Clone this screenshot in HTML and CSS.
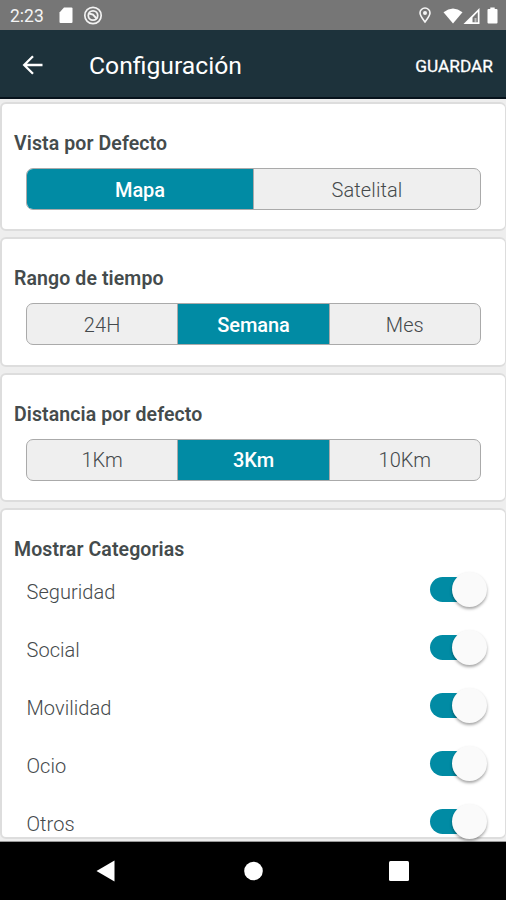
FILE: index.html
```html
<!DOCTYPE html>
<html lang="es">
<head>
<meta charset="utf-8">
<title>Configuración</title>
<link rel="stylesheet" href="styles.css">
</head>
<body>
<div class="status">
  <span class="clock">2:23</span>
  <svg class="sd" width="14" height="17" viewBox="0 0 14 17"><path fill="#fff" d="M5 0.5H12.5Q13.5 0.5 13.5 1.5V15Q13.5 16 12.5 16H1.5Q0.500 16 0.500 15V5.500Z"/></svg>
  <svg class="sync" width="20" height="20" viewBox="0 0 20 20" fill="none" stroke="#f2f2f2"><circle cx="10" cy="9.500" r="8.200" stroke-width="1.700"/><circle cx="10" cy="9.500" r="4.700" stroke-width="1.800"/><path stroke-width="1.900" d="M6 7.500L10 8.500L14 13"/></svg>
  <span class="grow"></span>
  <svg class="pin" width="12" height="17" viewBox="0 0 12 17"><path fill="none" stroke="#f5f5f5" stroke-width="1.600" d="M6 15C3 11 1 8.500 1 6A5 5 0 0 1 11 6C11 8.500 9 11 6 15Z"/><circle cx="6" cy="6" r="2" fill="#f5f5f5"/></svg>
  <svg class="wifi" width="20" height="16" viewBox="0 0 20 16"><path fill="#fff" d="M0.500 4.200Q10-3.200 19.500 4.200L10 15.500Z"/></svg>
  <svg class="signal" width="17" height="16" viewBox="0 0 17 16"><path fill="#fff" fill-rule="evenodd" d="M16.500 0V16H0.500ZM14.800 4L9.500 9.500V14.300H14.800Z"/><path fill="#fff" d="M11.500 10h2v4.500h-2z" opacity=".5"/></svg>
  <svg class="battery" width="11" height="17" viewBox="0 0 11 17"><path fill="#fff" d="M3.300 0.500H7.700V2H9.500Q10.500 2 10.500 3V15.500Q10.500 16.500 9.500 16.500H1.500Q0.500 16.500 0.500 15.500V3Q0.500 2 1.500 2H3.300Z"/></svg>
</div>
<header class="toolbar">
  <svg class="back" width="22" height="22" viewBox="0 0 22 22"><path fill="none" stroke="#fff" stroke-width="2.300" d="M20.500 11H3M11 2.200L2.200 11L11 19.800"/></svg>
  <h1 class="title">Configuración</h1>
  <span class="save">GUARDAR</span>
</header>
<main class="content">
  <section class="card">
    <h2 class="heading">Vista por Defecto</h2>
    <div class="segments"><span class="segment on">Mapa</span><span class="segment">Satelital</span></div>
  </section>
  <section class="card">
    <h2 class="heading">Rango de tiempo</h2>
    <div class="segments"><span class="segment">24H</span><span class="segment on">Semana</span><span class="segment">Mes</span></div>
  </section>
  <section class="card">
    <h2 class="heading">Distancia por defecto</h2>
    <div class="segments"><span class="segment">1Km</span><span class="segment on">3Km</span><span class="segment">10Km</span></div>
  </section>
  <section class="card categories">
    <h2 class="heading">Mostrar Categorias</h2>
    <div class="row"><span>Seguridad</span><span class="switch"><span class="knob"></span></span></div>
    <div class="row"><span>Social</span><span class="switch"><span class="knob"></span></span></div>
    <div class="row"><span>Movilidad</span><span class="switch"><span class="knob"></span></span></div>
    <div class="row"><span>Ocio</span><span class="switch"><span class="knob"></span></span></div>
    <div class="row"><span>Otros</span><span class="switch"><span class="knob"></span></span></div>
  </section>
</main>
<nav class="navbar">
  <svg width="20" height="22" viewBox="0 0 20 22"><path fill="#fff" d="M18.500 0.500V21.500L0.500 11Z"/></svg>
  <svg width="20" height="20" viewBox="0 0 20 20"><circle cx="10.500" cy="10" r="9.300" fill="#fff"/></svg>
  <svg width="20" height="20" viewBox="0 0 20 20"><rect width="20" height="20" rx="1.500" fill="#fff"/></svg>
</nav>
</body>
</html>
```
FILE: styles.css
```css
* { box-sizing: border-box; }
body {
  margin: 0;
  width: 506px;
  height: 900px;
  overflow: hidden;
  display: flex;
  flex-direction: column;
  background: #eee;
  font-family: Roboto, "Liberation Sans", sans-serif;
}
h1, h2 { margin: 0; }
.status {
  height: 30px;
  flex: none;
  display: flex;
  align-items: center;
  padding: 1px 8px 0 10px;
  background: #767676;
}
.clock { width: 49px; font-size: 17.5px; color: #f4f4f4; }
.sync { margin-left: 10px; }
.grow { flex: 1; }
.wifi { margin-left: 12px; }
.battery { margin-left: 7px; }
.toolbar {
  height: 69px;
  flex: none;
  display: flex;
  align-items: center;
  padding: 0 13px 0 22px;
  border-bottom: 2px solid #06121b;
  background: #1d323b;
  color: #fff;
}
.back { margin-top: 3px; }
.title {
  flex: 1;
  margin: 3px 0 0 45px;
  font-size: 24.700px;
  font-weight: 400;
}
.save { margin-top: 4px; font-size: 17.300px; font-weight: 400; color: #fff; -webkit-text-stroke: .3px #fff; }
.content {
  height: 743px;
  flex: none;
  display: flex;
  flex-direction: column;
  gap: 6px;
  padding: 3px 0 0;
  border-bottom: 1px solid #999;
}
.card {
  height: 129.300px;
  flex: none;
  padding: 25px 24px 0 12px;
  border: 2px solid #ddd;
  border-right-width: 1px;
  border-radius: 6px;
  background: #fff;
}
.heading {
  height: 30px;
  line-height: 30px;
  font-size: 19.500px;
  font-weight: 600;
  letter-spacing: .1px;
  color: #444b4c;
}
.segments {
  height: 42px;
  margin: 9px 0 0 12px;
  display: flex;
  border: 1px solid #aaa;
  border-radius: 7px;
  overflow: hidden;
  background: #efefef;
}
.segment {
  flex: 1 1 0;
  display: flex;
  align-items: center;
  justify-content: center;
  padding-top: 1px;
  font-size: 20px;
  font-weight: 300;
  letter-spacing: .1px;
  color: #44494b;
}
.segment + .segment { border-left: 1px solid #aaa; }
.segment.on { background: #018ba4; color: #fff; font-weight: 500; letter-spacing: -.1px; }
.categories { height: 331px; }
.row {
  height: 58px;
  display: flex;
  align-items: center;
  justify-content: space-between;
  padding: 0 0 0 12.500px;
  font-size: 20px;
  font-weight: 300;
  letter-spacing: .05px;
  color: #44494b;
}
.categories .heading { margin-bottom: -2px; }
.switch {
  width: 57px;
  height: 25px;
  display: flex;
  align-items: center;
  justify-content: flex-end;
  margin-top: -4px;
  margin-right: -6px;
  border-radius: 13px;
  background: linear-gradient(90deg, #018ba4 40px, transparent 40px);
}
.knob {
  width: 35px;
  height: 35px;
  flex: none;
  border-radius: 50%;
  background: #fafafa;
  box-shadow: 0 2px 3px rgba(0, 0, 0, .35);
}
.navbar {
  flex: 1;
  display: flex;
  align-items: center;
  justify-content: space-between;
  padding: 0 97px 0 96px;
  background: #000;
}
```
